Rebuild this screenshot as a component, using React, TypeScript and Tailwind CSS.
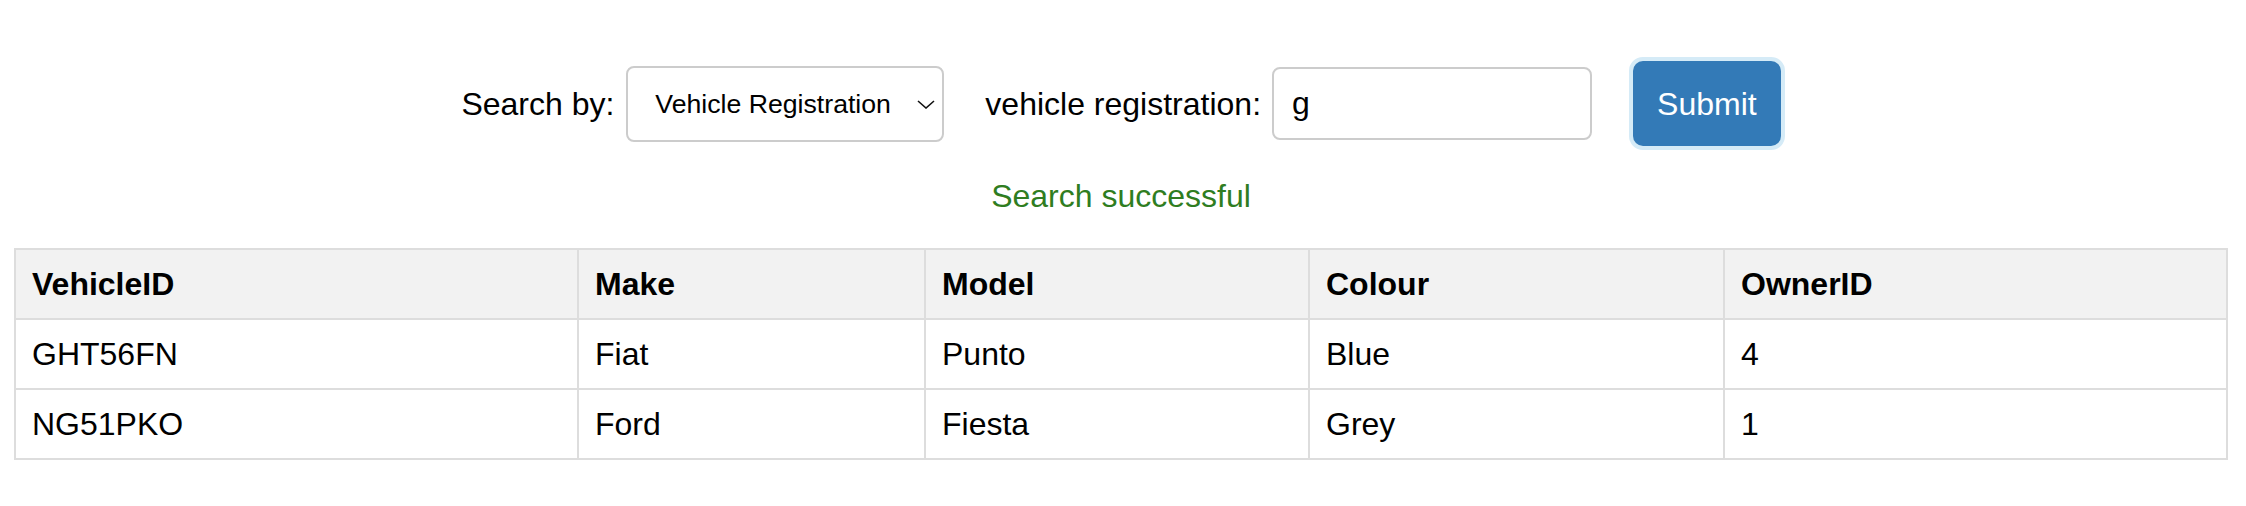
const vehicles = [
  { id: 'GHT56FN', make: 'Fiat', model: 'Punto', colour: 'Blue', owner: '4' },
  { id: 'NG51PKO', make: 'Ford', model: 'Fiesta', colour: 'Grey', owner: '1' },
]

const headers = ['VehicleID', 'Make', 'Model', 'Colour', 'OwnerID']

export default function App() {
  return (
    <div className="min-h-screen bg-white pl-[14px] pr-[18px] pt-[61px] font-['Liberation_Sans',Arial,sans-serif] text-[32px] text-black">
      <form className="flex items-center justify-center" onSubmit={(e) => e.preventDefault()}>
        <label htmlFor="searchBy" className="mr-[12px]">
          Search by:
        </label>
        <div className="relative mr-[41px]">
          <select
            id="searchBy"
            className="h-[76px] w-[318px] appearance-none rounded-[8px] border-2 border-[#ccc] bg-white pl-[27px] text-[26.67px] text-black outline-none"
          >
            <option>Vehicle Registration</option>
          </select>
          <svg
            viewBox="0 0 18 9"
            className="pointer-events-none absolute right-[9px] top-[34px] h-[9px] w-[18px]"
          >
            <path d="M1 1l8 7 8-7" fill="none" stroke="#111" strokeWidth="1.6" />
          </svg>
        </div>
        <label htmlFor="reg" className="mr-[11px]">
          vehicle registration:
        </label>
        <input
          id="reg"
          defaultValue="g"
          className="mr-[41px] h-[73px] w-[320px] rounded-[8px] border-2 border-[#ccc] px-[18px] text-[32px] text-black outline-none"
        />
        <button
          type="submit"
          className="h-[85px] rounded-[10px] bg-[#337ab7] px-[24px] text-[32px] text-white ring-4 ring-[#d5ebf7]"
        >
          Submit
        </button>
      </form>

      <p className="mt-[32px] text-center leading-[37px] text-[#2f7d21]">Search successful</p>

      <table className="mt-[33px] w-full table-fixed border-collapse">
        <colgroup>
          <col className="w-[563px]" />
          <col className="w-[347px]" />
          <col className="w-[384px]" />
          <col className="w-[415px]" />
          <col />
        </colgroup>
        <thead>
          <tr className="bg-[#f2f2f2]">
            {headers.map((h) => (
              <th
                key={h}
                className="border-2 border-[#ddd] px-[16px] py-[16px] text-left font-bold leading-[36px]"
              >
                {h}
              </th>
            ))}
          </tr>
        </thead>
        <tbody>
          {vehicles.map((v) => (
            <tr key={v.id}>
              {[v.id, v.make, v.model, v.colour, v.owner].map((c, i) => (
                <td key={i} className="border-2 border-[#ddd] px-[16px] py-[16px] leading-[36px]">
                  {c}
                </td>
              ))}
            </tr>
          ))}
        </tbody>
      </table>
    </div>
  )
}
